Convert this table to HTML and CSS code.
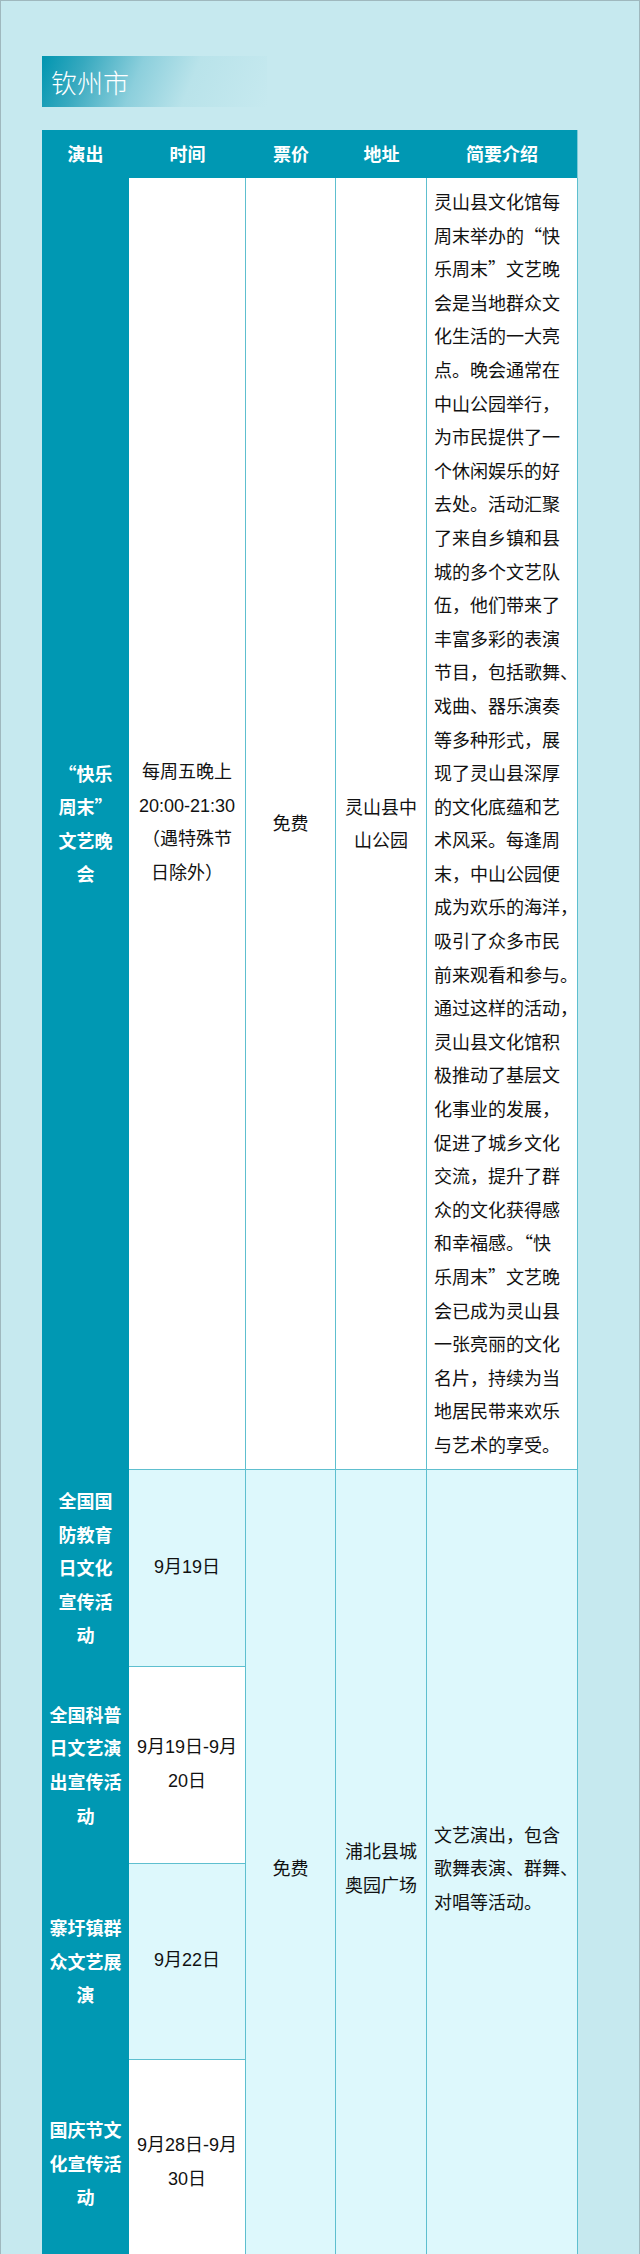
FILE: index.html
```html
<!DOCTYPE html>
<html lang="zh-CN">
<head>
<meta charset="utf-8">
<title>钦州市</title>
<link rel="stylesheet" href="styles.css">
</head>
<body>
<div class="page">
  <div class="city-title">钦州市</div>
  <table class="schedule">
    <colgroup>
      <col class="c-show">
      <col class="c-time">
      <col class="c-price">
      <col class="c-addr">
      <col class="c-desc">
    </colgroup>
    <thead>
      <tr>
        <th>演出</th>
        <th>时间</th>
        <th>票价</th>
        <th>地址</th>
        <th>简要介绍</th>
      </tr>
    </thead>
    <tbody>
      <tr class="row-main">
        <td class="show">“快乐<br>周末”<br>文艺晚<br>会</td>
        <td class="time num">每周五晚上<br>20:00-21:30<br>（遇特殊节<br>日除外）</td>
        <td class="center">免费</td>
        <td class="center">灵山县中<br>山公园</td>
        <td class="desc">灵山县文化馆每<br>周末举办的“快<br>乐周末”文艺晚<br>会是当地群众文<br>化生活的一大亮<br>点。晚会通常在<br>中山公园举行，<br>为市民提供了一<br>个休闲娱乐的好<br>去处。活动汇聚<br>了来自乡镇和县<br>城的多个文艺队<br>伍，他们带来了<br>丰富多彩的表演<br>节目，包括歌舞、<br>戏曲、器乐演奏<br>等多种形式，展<br>现了灵山县深厚<br>的文化底蕴和艺<br>术风采。每逢周<br>末，中山公园便<br>成为欢乐的海洋，<br>吸引了众多市民<br>前来观看和参与。<br>通过这样的活动，<br>灵山县文化馆积<br>极推动了基层文<br>化事业的发展，<br>促进了城乡文化<br>交流，提升了群<br>众的文化获得感<br>和幸福感。“快<br>乐周末”文艺晚<br>会已成为灵山县<br>一张亮丽的文化<br>名片，持续为当<br>地居民带来欢乐<br>与艺术的享受。</td>
      </tr>
      <tr class="row-a">
        <td class="show">全国国<br>防教育<br>日文化<br>宣传活<br>动</td>
        <td class="time num tint">9月19日</td>
        <td class="center tint" rowspan="4">免费</td>
        <td class="center tint" rowspan="4">浦北县城<br>奥园广场</td>
        <td class="desc tint" rowspan="4">文艺演出，包含<br>歌舞表演、群舞、<br>对唱等活动。</td>
      </tr>
      <tr class="row-b">
        <td class="show">全国科普<br>日文艺演<br>出宣传活<br>动</td>
        <td class="time num">9月19日-9月<br>20日</td>
      </tr>
      <tr class="row-c">
        <td class="show">寨圩镇群<br>众文艺展<br>演</td>
        <td class="time num tint">9月22日</td>
      </tr>
      <tr class="row-d">
        <td class="show">国庆节文<br>化宣传活<br>动</td>
        <td class="time num">9月28日-9月<br>30日</td>
      </tr>
    </tbody>
  </table>
</div>
</body>
</html>
```

FILE: styles.css
```css
html, body {
  margin: 0;
  padding: 0;
  background: #c6e9ef;
}

.page {
  width: 640px;
  box-sizing: border-box;
  border-top: 1px solid #9fb8be;
  border-left: 1px solid #9fb8be;
  border-right: 1px solid #9fb8be;
  background: #c6e9ef;
  padding: 55px 0 0 41px;
}

.city-title {
  width: 225px;
  height: 51px;
  box-sizing: border-box;
  padding-left: 9px;
  display: flex;
  align-items: center;
  color: #ffffff;
  font-family: "Noto Sans CJK SC", sans-serif;
  font-weight: 300;
  font-size: 26px;
  background: linear-gradient(112deg, #0095b0 0%, #37a9bf 18%, #8ccfdc 42%, #b9e3ea 65%, rgba(198, 233, 239, 0) 100%);
}

.schedule {
  margin-top: 23px;
  width: 536px;
  table-layout: fixed;
  border-collapse: separate;
  border-spacing: 0;
  font-family: "Noto Sans CJK SC", "Liberation Sans", sans-serif;
  font-size: 18px;
  line-height: 33.6px;
  color: #111111;
}

.c-show { width: 87px; }
.c-time { width: 117px; }
.c-price { width: 90px; }
.c-addr { width: 91px; }
.c-desc { width: 151px; }

.schedule th {
  height: 48px;
  padding: 0;
  background: #0098b3;
  color: #ffffff;
  font-weight: 700;
  font-size: 18px;
  text-align: center;
  vertical-align: middle;
}

.schedule th:last-child {
  border-right: 1px solid #7ccad7;
}

.schedule td {
  padding: 0;
  background: #ffffff;
  border-right: 1px solid #5ebfcf;
  border-bottom: 1px solid #5ebfcf;
  vertical-align: middle;
  text-align: center;
}

.schedule td.show {
  background: #0098b3;
  color: #ffffff;
  font-weight: 700;
  border-right: none;
  border-bottom: none;
  padding: 0 4px;
}

.schedule td.num {
  font-family: "Liberation Sans", "Noto Sans CJK SC", sans-serif;
}

.schedule td.tint {
  background: #ddf8fc;
}

.schedule td.desc {
  text-align: left;
  white-space: nowrap;
  padding: 7px 0 7px 7px;
}

.row-a { height: 197px; }
.row-b { height: 197px; }
.row-c { height: 196px; }
.row-d { height: 208px; }
```
